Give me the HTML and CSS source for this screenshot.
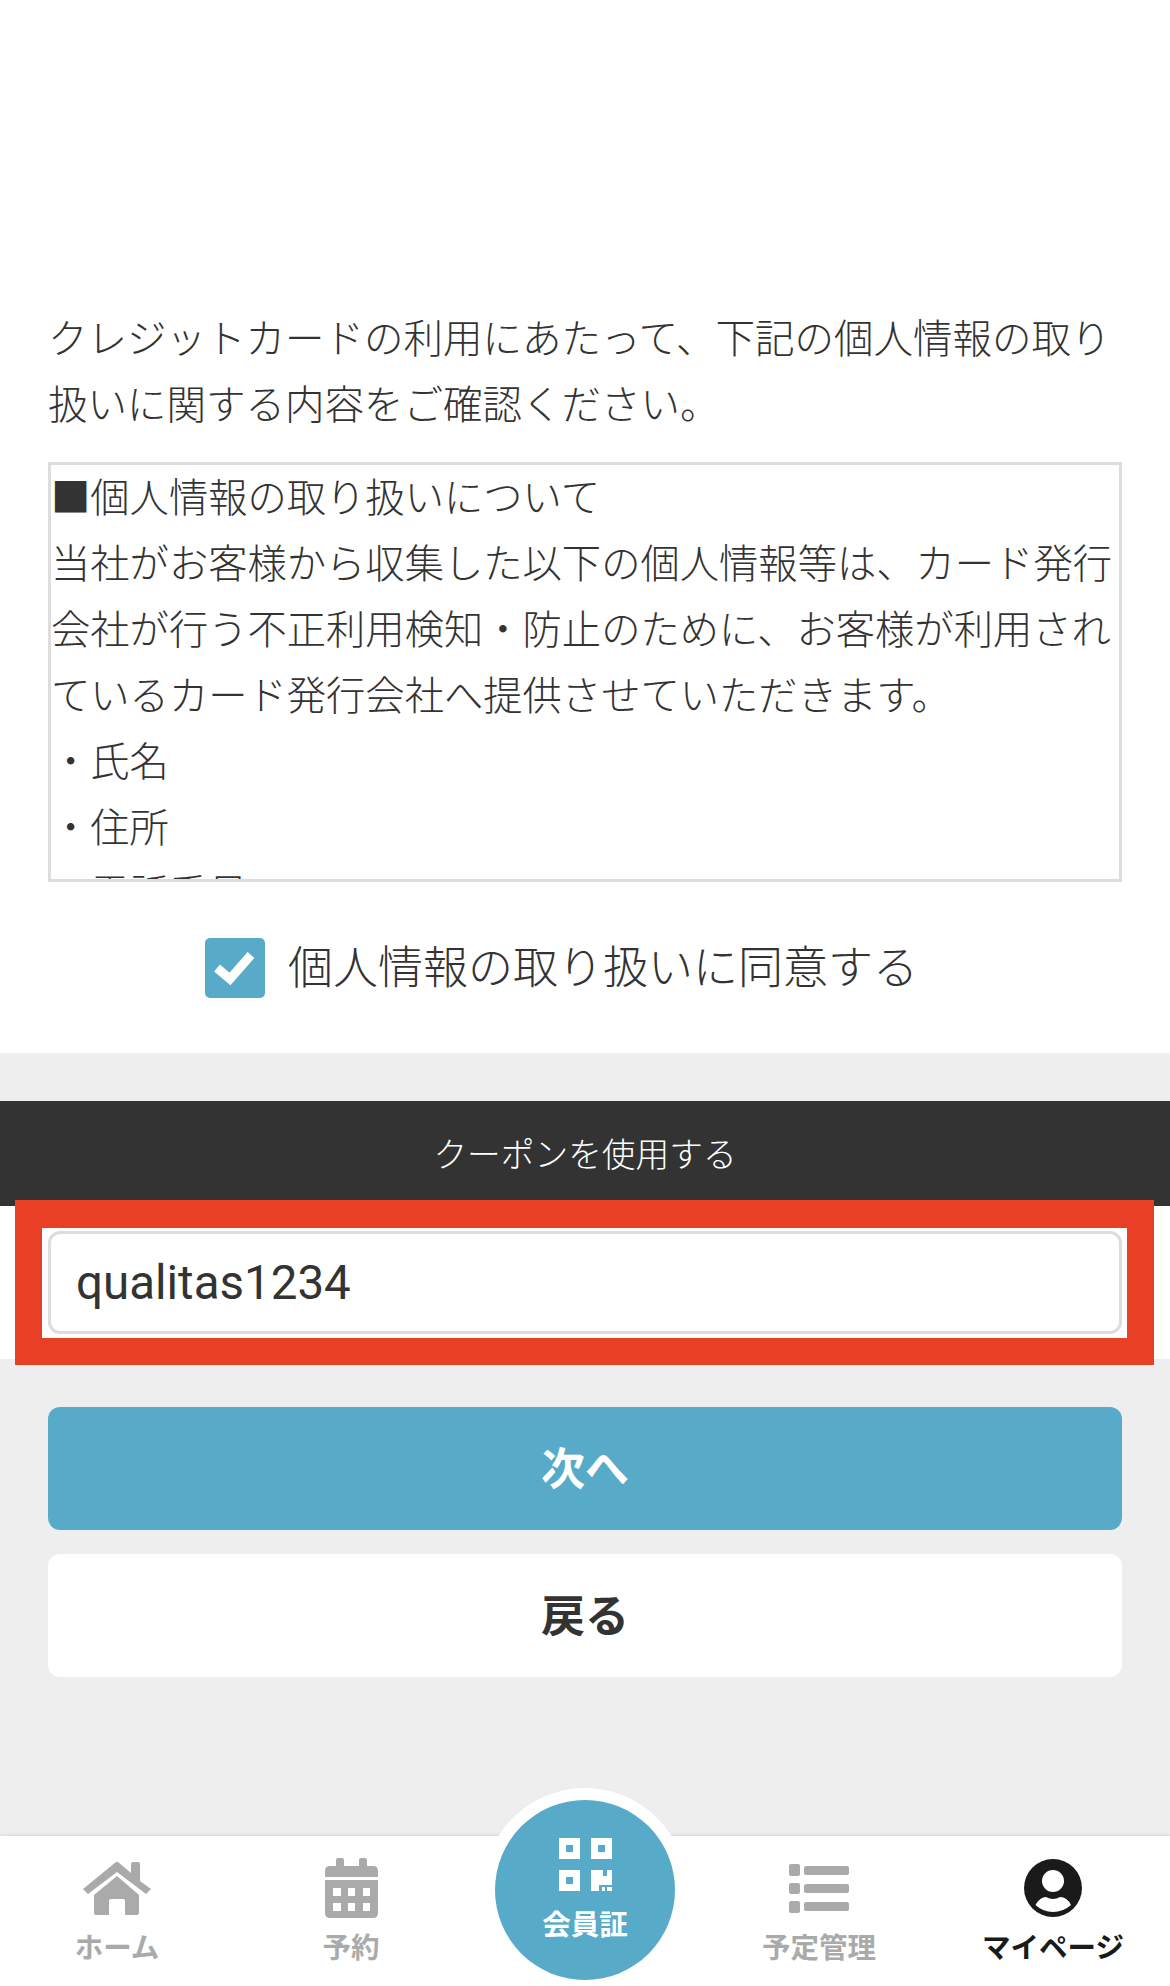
FILE: index.html
```html
<!DOCTYPE html>
<html lang="ja">
<head>
<meta charset="utf-8">
<title>クーポンを使用する</title>
<link rel="stylesheet" href="styles.css">
</head>
<body>
<div class="page">
  <section class="consent">
    <p class="intro">クレジットカードの利用にあたって、下記の個人情報の取り扱いに関する内容をご確認ください。</p>
    <div class="terms"><div class="terms-text">■個人情報の取り扱いについて<br>当社がお客様から収集した以下の個人情報等は、カード発行会社が行う不正利用検知・防止のために、お客様が利用されているカード発行会社へ提供させていただきます。<br>・氏名<br>・住所<br>・電話番号</div></div>
    <div class="agree">
      <span class="check"><svg viewBox="0 0 60 60" width="60" height="60"><path class="check-mark" d="M12 30l13 11 21-24"/></svg></span>
      <span class="agree-label">個人情報の取り扱いに同意する</span>
    </div>
  </section>

  <section class="coupon">
    <h2 class="coupon-title">クーポンを使用する</h2>
    <div class="coupon-body">
      <div class="coupon-input">qualitas1234</div>
      <div class="highlight"></div>
    </div>
  </section>

  <div class="actions">
    <button class="btn btn-primary">次へ</button>
    <button class="btn btn-secondary">戻る</button>
  </div>

  <nav class="nav">
    <a class="nav-item">
      <span class="nav-icon"><svg viewBox="0 0 68 53" width="68" height="53"><path class="fill" d="M0 27 33 0h2l13 11V2q0-2 2-2h5q2 0 2 2v17l11 8-5 5-29-22L5 32zM34 14l22 19v18q0 2-2 2H42V39q0-2-2-2H28q-2 0-2 2v14H13q-2 0-2-2V33z"/></svg></span>
      <span class="nav-label">ホーム</span>
    </a>
    <a class="nav-item">
      <span class="nav-icon"><svg viewBox="0 0 53 60" width="53" height="60"><path class="fill" fill-rule="evenodd" d="M11 2q0-2 2-2h4q2 0 2 2v6h15V2q0-2 2-2h4q2 0 2 2v6h6q5 0 5 5v6H0v-6q0-5 5-5h6zM0 22h53v33q0 5-5 5H5q-5 0-5-5zM8 30v8h8v-8zM23 30v8h7v-8zM38 30v8h7v-8zM8 45v8h8v-8zM23 45v8h7v-8zM38 45v8h7v-8z"/></svg></span>
      <span class="nav-label">予約</span>
    </a>
    <a class="nav-item nav-center">
      <span class="member">
        <svg viewBox="0 0 53 53" width="53" height="53"><path class="white" fill-rule="evenodd" d="M0 0h21v21H0zM7 7v7h7V7zM32 0h21v21H32zM39 7v7h7V7zM0 32h21v21H0zM7 39v7h7v-7zM32 32h12v6h4v-6h5v15H40v6h-8zM43 49h3v4h-3zM48 49h5v4h-5z"/></svg>
        <span class="member-label">会員証</span>
      </span>
    </a>
    <a class="nav-item">
      <span class="nav-icon"><svg viewBox="0 0 60 49" width="60" height="49"><path class="fill" d="M2 0h7q2 0 2 2v8q0 2-2 2H2q-2 0-2-2V2q0-2 2-2zM2 19h7q2 0 2 2v7q0 2-2 2H2q-2 0-2-2v-7q0-2 2-2zM2 37h7q2 0 2 2v8q0 2-2 2H2q-2 0-2-2v-8q0-2 2-2zM18 2h40q2 0 2 2v5q0 2-2 2H18q-3 0-3-2V4q0-2 3-2zM18 20h40q2 0 2 2v5q0 2-2 2H18q-3 0-3-2v-5q0-2 3-2zM18 38h40q2 0 2 2v5q0 2-2 2H18q-3 0-3-2v-5q0-2 3-2z"/></svg></span>
      <span class="nav-label">予定管理</span>
    </a>
    <a class="nav-item nav-active">
      <span class="nav-icon"><svg viewBox="0 0 58 58" width="58" height="58"><circle class="dark" cx="29" cy="29" r="29"/><circle class="white" cx="29" cy="22" r="11"/><path class="white" d="M11.500 46Q16 38 22 38q7 4 14 0 7 0 11 8-8 7-18 7T11.500 46z"/></svg></span>
      <span class="nav-label">マイページ</span>
    </a>
  </nav>
</div>
</body>
</html>
```
FILE: styles.css
```css
* { box-sizing: border-box; }
html, body { margin: 0; padding: 0; }
body {
  font-family: "Noto Sans CJK JP", "Noto Sans", sans-serif;
  color: #333;
  background: #eee;
}
.page {
  width: 1170px;
  height: 1986px;
  display: flex;
  flex-direction: column;
  overflow: hidden;
  background: #eee;
}
.consent {
  background: #fff;
  padding: 303px 48px 55px;
  font-size: 39.500px;
  line-height: 66px;
  font-weight: 300;
}
.intro { margin: 0 0 27px; }
.terms {
  height: 420px;
  border: 3px solid #ddd;
  overflow: hidden;
}
.terms-text { margin-top: -3px; font-size: 39.300px; }
.agree {
  display: flex;
  align-items: center;
  gap: 23px;
  margin-top: 56px;
  padding-left: 157px;
}
.check {
  width: 60px;
  height: 60px;
  border-radius: 5px;
  background: #57aac8;
  display: block;
}
.check svg { display: block; }
.check-mark { fill: none; stroke: #fff; stroke-width: 9; }
.agree-label { font-size: 45px; line-height: 60px; margin-top: -6px; }
.coupon { margin-top: 48px; background: #fff; }
.coupon-title {
  margin: 0;
  height: 105px;
  background: #333;
  color: #fff;
  font-size: 33.700px;
  font-weight: 300;
  line-height: 103px;
  text-align: center;
}
.coupon-body {
  position: relative;
  padding: 25px 48px;
}
.coupon-input {
  height: 103px;
  border: 3px solid #ddd;
  border-radius: 12px;
  background: #fff;
  padding-left: 25px;
  font-family: Roboto, "Noto Sans", sans-serif;
  font-size: 47.500px;
  line-height: 99px;
  color: #333;
}
.highlight {
  position: absolute;
  left: 15px;
  top: -6px;
  width: 1139px;
  height: 165px;
  border-style: solid;
  border-color: #e94025;
  border-width: 28px 27px 27px 27px;
}
.actions {
  padding: 48px 48px 0;
  display: flex;
  flex-direction: column;
  gap: 24px;
}
.btn {
  display: block;
  width: 100%;
  height: 123px;
  padding: 0 0 5px;
  border: 0;
  border-radius: 12px;
  font-family: inherit;
  font-size: 44px;
  font-weight: 700;
}
.btn-primary { background: #57aac8; color: #fff; }
.btn-secondary { background: #fff; color: #333; }
.nav {
  margin-top: auto;
  height: 150px;
  background: #fff;
  box-shadow: 0 -1px 3px rgba(0, 0, 0, .1);
  display: grid;
  grid-template-columns: repeat(5, 234px);
  position: relative;
}
.nav-item {
  display: flex;
  flex-direction: column;
  align-items: center;
  color: #aaa;
  font-size: 28.500px;
  font-weight: 700;
}
.nav-icon {
  height: 82px;
  padding-top: 22px;
  display: flex;
  align-items: center;
}
.nav-label { line-height: 40px; margin-top: 8px; white-space: nowrap; }
.nav-active { color: #1a1a1a; }
.fill { fill: #aaa; }
.white { fill: #fff; }
.dark { fill: #1a1a1a; }
.nav-center { position: relative; }
.member {
  position: absolute;
  left: 27px;
  top: -36px;
  width: 180px;
  height: 180px;
  border-radius: 50%;
  background: #57aac8;
  box-shadow: 0 0 0 12px #fff;
  display: flex;
  flex-direction: column;
  align-items: center;
  padding-top: 38px;
  color: #fff;
}
.member svg { display: block; }
.member-label { line-height: 40px; margin-top: 12px; }
```
